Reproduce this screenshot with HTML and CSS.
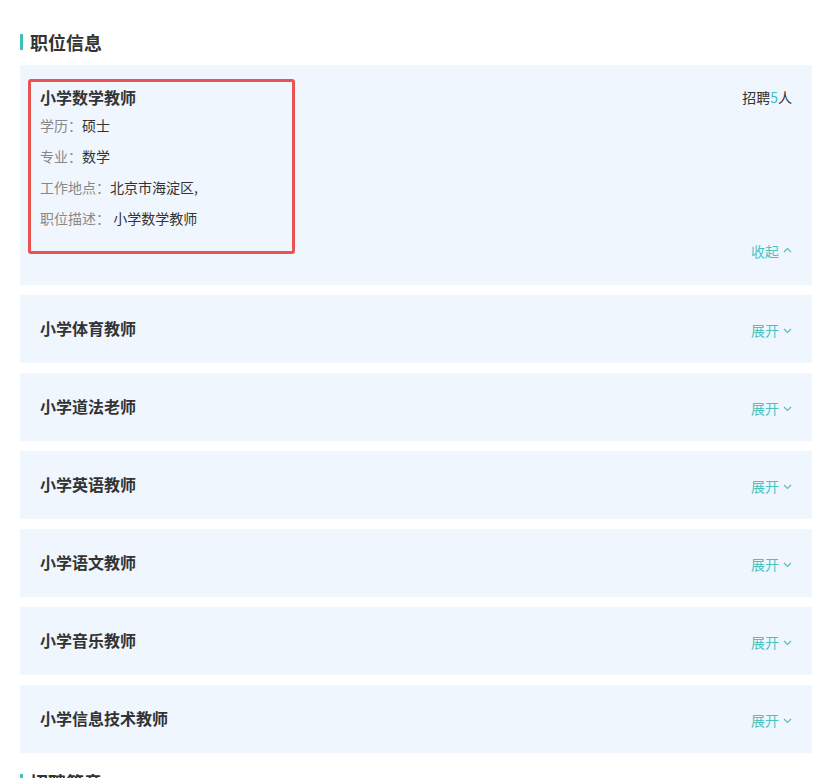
FILE: index.html
```html
<!DOCTYPE html>
<html lang="zh-CN">
<head>
<meta charset="utf-8">
<title>职位信息</title>
<link rel="stylesheet" href="styles.css">
</head>
<body>
<div class="page">
  <h2 class="section-title">职位信息</h2>
  <div class="list">
    <div class="card open">
      <div class="mark"></div>
      <div class="card-head">
        <div class="job-name">小学数学教师</div>
        <div class="count">招聘<span class="num">5</span>人</div>
      </div>
      <div class="row"><span class="label">学历：</span><span class="value">硕士</span></div>
      <div class="row"><span class="label">专业：</span><span class="value">数学</span></div>
      <div class="row"><span class="label">工作地点：</span><span class="value">北京市海淀区,</span></div>
      <div class="row"><span class="label">职位描述：</span><span class="value">&nbsp;小学数学教师</span></div>
      <div class="toggle-row"><span class="toggle">收起<svg class="chev" width="9" height="6" viewBox="0 0 9 6"><path d="M1 5 L4.5 1.5 L8 5" fill="none" stroke="currentColor" stroke-width="1.2"/></svg></span></div>
    </div>
    <div class="card closed"><div class="job-name">小学体育教师</div><span class="toggle down">展开<svg class="chev" width="9" height="6" viewBox="0 0 9 6"><path d="M1 1 L4.5 4.5 L8 1" fill="none" stroke="currentColor" stroke-width="1.2"/></svg></span></div>
    <div class="card closed"><div class="job-name">小学道法老师</div><span class="toggle down">展开<svg class="chev" width="9" height="6" viewBox="0 0 9 6"><path d="M1 1 L4.5 4.5 L8 1" fill="none" stroke="currentColor" stroke-width="1.2"/></svg></span></div>
    <div class="card closed"><div class="job-name">小学英语教师</div><span class="toggle down">展开<svg class="chev" width="9" height="6" viewBox="0 0 9 6"><path d="M1 1 L4.5 4.5 L8 1" fill="none" stroke="currentColor" stroke-width="1.2"/></svg></span></div>
    <div class="card closed"><div class="job-name">小学语文教师</div><span class="toggle down">展开<svg class="chev" width="9" height="6" viewBox="0 0 9 6"><path d="M1 1 L4.5 4.5 L8 1" fill="none" stroke="currentColor" stroke-width="1.2"/></svg></span></div>
    <div class="card closed"><div class="job-name">小学音乐教师</div><span class="toggle down">展开<svg class="chev" width="9" height="6" viewBox="0 0 9 6"><path d="M1 1 L4.5 4.5 L8 1" fill="none" stroke="currentColor" stroke-width="1.2"/></svg></span></div>
    <div class="card closed"><div class="job-name">小学信息技术教师</div><span class="toggle down">展开<svg class="chev" width="9" height="6" viewBox="0 0 9 6"><path d="M1 1 L4.5 4.5 L8 1" fill="none" stroke="currentColor" stroke-width="1.2"/></svg></span></div>
  </div>
  <h2 class="section-title next">招聘简章</h2>
</div>
</body>
</html>
```
FILE: styles.css
```css
* { box-sizing: border-box; }
html, body { margin: 0; padding: 0; background: #fff; }
body {
  font-family: "Noto Sans CJK SC", "Noto Sans", sans-serif;
  color: #333;
  overflow: hidden;
}
.page { padding: 30px 19px 0 20px; }
.section-title {
  margin: 0;
  font-size: 18px;
  line-height: 24px;
  font-weight: bold;
  color: #333;
  padding-left: 10px;
  height: 24px;
  display: flex;
  align-items: center;
  position: relative;
}
.section-title::before {
  content: "";
  position: absolute;
  left: 0;
  top: 4px;
  width: 3px;
  height: 16px;
  background: #3fbfb9;
}
.section-title.next { margin-top: 17px; }
.list {
  margin-top: 11px;
  display: flex;
  flex-direction: column;
  gap: 10px;
}
.card { background: #f0f6fd; position: relative; }
.card.open { padding: 21px 20px 24px 20px; }
.card.closed {
  height: 68px;
  padding: 0 20px 2px 20px;
  display: flex;
  align-items: center;
  justify-content: space-between;
}
.mark {
  position: absolute;
  left: 8px;
  top: 14px;
  width: 267px;
  height: 175px;
  border: 3px solid #ea5353;
  border-radius: 3px;
  pointer-events: none;
}
.card-head {
  display: flex;
  justify-content: space-between;
  align-items: center;
}
.job-name {
  font-size: 16px;
  line-height: 22px;
  font-weight: bold;
  color: #333;
}
.count { font-size: 14px; color: #333; line-height: 22px; }
.num { color: #3fbfb9; }
.row {
  font-size: 14px;
  line-height: 20px;
  margin-top: 11px;
}
.card-head + .row { margin-top: 7px; }
.label { color: #888; }
.value { color: #333; }
.toggle-row {
  display: flex;
  justify-content: flex-end;
  margin-top: 13px;
  line-height: 20px;
}
.toggle {
  font-size: 14px;
  line-height: 20px;
  color: #4cc3bf;
  display: inline-flex;
  align-items: center;
  gap: 4px;
}
.toggle.down { margin-top: 3px; }
.chev { display: block; margin-top: -2px; }
.toggle.down .chev { margin-top: 2px; }
```
